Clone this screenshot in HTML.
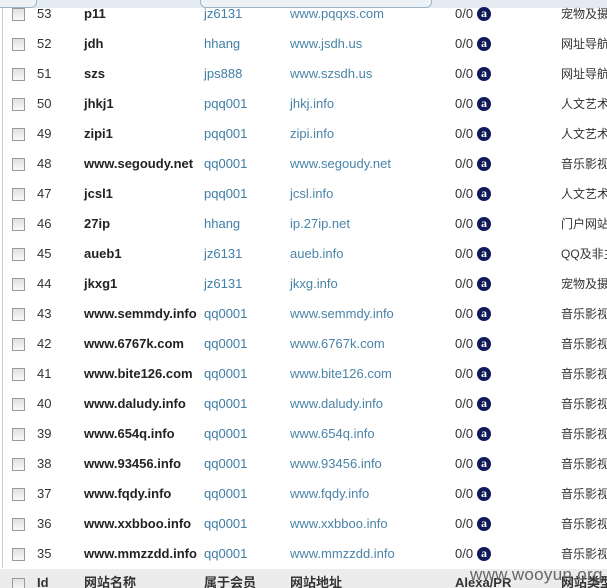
<!DOCTYPE html>
<html style="overflow:hidden"><head><meta charset="utf-8"><style>
html,body{margin:0;width:607px;height:588px;overflow:hidden}
body{background:#fff;font-family:"Liberation Sans","Noto Sans CJK SC",sans-serif;font-size:13px;position:relative}
.top{position:absolute;left:0;top:0;width:607px;height:8px;background:#e3eaf1;overflow:hidden}
.tab{position:absolute;left:200px;top:-10px;width:230px;height:16px;border:1px solid #9fb3c7;border-radius:0 0 6px 6px;background:#edf2f7}
.tab0{position:absolute;left:-10px;top:-10px;width:45px;height:16px;border:1px solid #9fb3c7;border-radius:0 0 6px 6px;background:#edf2f7}
.lb{position:absolute;left:2px;top:8px;width:1px;height:560px;background:#ccc}
.r{position:absolute;left:0;width:607px;height:30px;line-height:30px;white-space:nowrap;overflow:hidden}
.r span{position:absolute}
.cb{position:absolute;left:12px;top:9px;width:11px;height:11px;border:1px solid #9a9a9a;background:linear-gradient(#e0e0e0,#fafafa)}
.id{left:37px;color:#333}
.nm{left:84px;font-weight:bold;color:#222}
.mb{left:204px;color:#3f7ea6}
.url{left:290px;color:#4a84a8}
.ax{left:455px;color:#333}
.ic{position:absolute;left:477px;top:8px;width:14px;height:14px;border-radius:50%;background:#101a58;color:#fff;font:bold 12px/13px "Liberation Serif",serif;text-align:center}
.ty{left:561px;color:#333;font-size:12px}
.ft{position:absolute;left:0;top:569px;width:607px;height:19px;background:#ececec;overflow:hidden;white-space:nowrap}
.ft span{position:absolute;top:6px;font-weight:bold;color:#333;font-size:13px;line-height:16px}
.wm{position:absolute;left:470px;top:565px;font-size:17px;line-height:20px;color:#666;white-space:nowrap;letter-spacing:0.3px}
</style></head><body>
<div class="top"><div class="tab0"></div><div class="tab"></div></div>
<div class="lb"></div>
<div class="r" style="top:-1px"><i class="cb"></i><span class="id">53</span><span class="nm">p11</span><span class="mb">jz6131</span><span class="url">www.pqqxs.com</span><span class="ax">0/0</span><i class="ic">a</i><span class="ty">宠物及摄影</span></div>
<div class="r" style="top:29px"><i class="cb"></i><span class="id">52</span><span class="nm">jdh</span><span class="mb">hhang</span><span class="url">www.jsdh.us</span><span class="ax">0/0</span><i class="ic">a</i><span class="ty">网址导航</span></div>
<div class="r" style="top:59px"><i class="cb"></i><span class="id">51</span><span class="nm">szs</span><span class="mb">jps888</span><span class="url">www.szsdh.us</span><span class="ax">0/0</span><i class="ic">a</i><span class="ty">网址导航</span></div>
<div class="r" style="top:89px"><i class="cb"></i><span class="id">50</span><span class="nm">jhkj1</span><span class="mb">pqq001</span><span class="url">jhkj.info</span><span class="ax">0/0</span><i class="ic">a</i><span class="ty">人文艺术</span></div>
<div class="r" style="top:119px"><i class="cb"></i><span class="id">49</span><span class="nm">zipi1</span><span class="mb">pqq001</span><span class="url">zipi.info</span><span class="ax">0/0</span><i class="ic">a</i><span class="ty">人文艺术</span></div>
<div class="r" style="top:149px"><i class="cb"></i><span class="id">48</span><span class="nm">www.segoudy.net</span><span class="mb">qq0001</span><span class="url">www.segoudy.net</span><span class="ax">0/0</span><i class="ic">a</i><span class="ty">音乐影视</span></div>
<div class="r" style="top:179px"><i class="cb"></i><span class="id">47</span><span class="nm">jcsl1</span><span class="mb">pqq001</span><span class="url">jcsl.info</span><span class="ax">0/0</span><i class="ic">a</i><span class="ty">人文艺术</span></div>
<div class="r" style="top:209px"><i class="cb"></i><span class="id">46</span><span class="nm">27ip</span><span class="mb">hhang</span><span class="url">ip.27ip.net</span><span class="ax">0/0</span><i class="ic">a</i><span class="ty">门户网站</span></div>
<div class="r" style="top:239px"><i class="cb"></i><span class="id">45</span><span class="nm">aueb1</span><span class="mb">jz6131</span><span class="url">aueb.info</span><span class="ax">0/0</span><i class="ic">a</i><span class="ty">QQ及非主</span></div>
<div class="r" style="top:269px"><i class="cb"></i><span class="id">44</span><span class="nm">jkxg1</span><span class="mb">jz6131</span><span class="url">jkxg.info</span><span class="ax">0/0</span><i class="ic">a</i><span class="ty">宠物及摄影</span></div>
<div class="r" style="top:299px"><i class="cb"></i><span class="id">43</span><span class="nm">www.semmdy.info</span><span class="mb">qq0001</span><span class="url">www.semmdy.info</span><span class="ax">0/0</span><i class="ic">a</i><span class="ty">音乐影视</span></div>
<div class="r" style="top:329px"><i class="cb"></i><span class="id">42</span><span class="nm">www.6767k.com</span><span class="mb">qq0001</span><span class="url">www.6767k.com</span><span class="ax">0/0</span><i class="ic">a</i><span class="ty">音乐影视</span></div>
<div class="r" style="top:359px"><i class="cb"></i><span class="id">41</span><span class="nm">www.bite126.com</span><span class="mb">qq0001</span><span class="url">www.bite126.com</span><span class="ax">0/0</span><i class="ic">a</i><span class="ty">音乐影视</span></div>
<div class="r" style="top:389px"><i class="cb"></i><span class="id">40</span><span class="nm">www.daludy.info</span><span class="mb">qq0001</span><span class="url">www.daludy.info</span><span class="ax">0/0</span><i class="ic">a</i><span class="ty">音乐影视</span></div>
<div class="r" style="top:419px"><i class="cb"></i><span class="id">39</span><span class="nm">www.654q.info</span><span class="mb">qq0001</span><span class="url">www.654q.info</span><span class="ax">0/0</span><i class="ic">a</i><span class="ty">音乐影视</span></div>
<div class="r" style="top:449px"><i class="cb"></i><span class="id">38</span><span class="nm">www.93456.info</span><span class="mb">qq0001</span><span class="url">www.93456.info</span><span class="ax">0/0</span><i class="ic">a</i><span class="ty">音乐影视</span></div>
<div class="r" style="top:479px"><i class="cb"></i><span class="id">37</span><span class="nm">www.fqdy.info</span><span class="mb">qq0001</span><span class="url">www.fqdy.info</span><span class="ax">0/0</span><i class="ic">a</i><span class="ty">音乐影视</span></div>
<div class="r" style="top:509px"><i class="cb"></i><span class="id">36</span><span class="nm">www.xxbboo.info</span><span class="mb">qq0001</span><span class="url">www.xxbboo.info</span><span class="ax">0/0</span><i class="ic">a</i><span class="ty">音乐影视</span></div>
<div class="r" style="top:539px"><i class="cb"></i><span class="id">35</span><span class="nm">www.mmzzdd.info</span><span class="mb">qq0001</span><span class="url">www.mmzzdd.info</span><span class="ax">0/0</span><i class="ic">a</i><span class="ty">音乐影视</span></div>
<div class="ft"><i class="cb" style="top:9px"></i><span style="left:37px">Id</span><span style="left:84px">网站名称</span><span style="left:204px">属于会员</span><span style="left:290px">网站地址</span><span style="left:455px">Alexa/PR</span><span style="left:561px">网站类型</span></div>
<div class="wm">www.wooyun.org</div>
</body></html>
